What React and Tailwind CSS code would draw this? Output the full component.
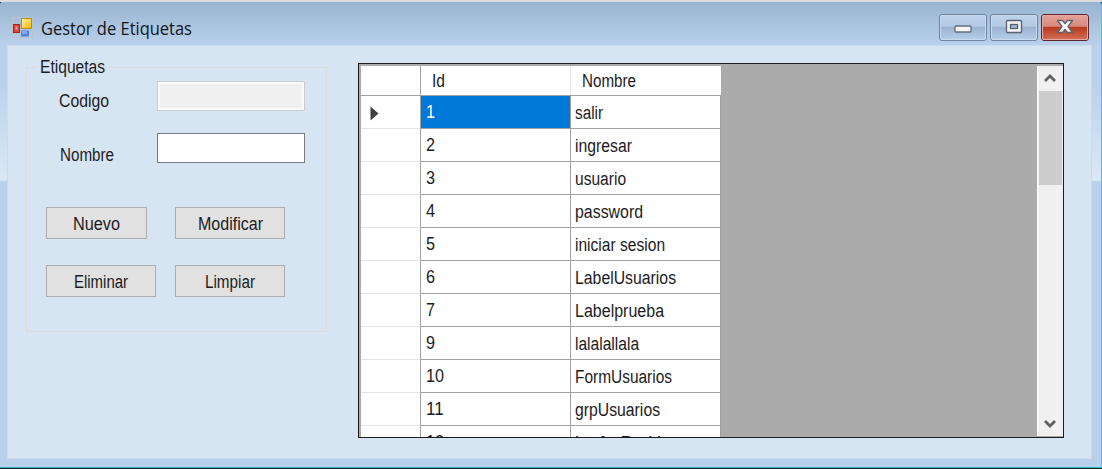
import { useLayoutEffect, useRef } from "react";

// Single line of text squeezed to the narrow widths of the system bitmap font.
function Label({ children, width, className = "" }) {
  const ref = useRef(null);
  useLayoutEffect(() => {
    const el = ref.current;
    el.style.transform = `scaleX(${width / el.offsetWidth})`;
  }, [width]);
  return (
    <span className={`block shrink-0 ${className}`} style={{ width }}>
      <span ref={ref} className="inline-block origin-left whitespace-nowrap">
        {children}
      </span>
    </span>
  );
}

const rows = [
  ["1", 9, "salir", 28],
  ["2", 9, "ingresar", 57],
  ["3", 9, "usuario", 51],
  ["4", 9, "password", 68],
  ["5", 9, "iniciar sesion", 90],
  ["6", 9, "LabelUsuarios", 101],
  ["7", 9, "Labelprueba", 89],
  ["9", 9, "lalalallala", 64],
  ["10", 18, "FormUsuarios", 97],
  ["11", 18, "grpUsuarios", 85],
  ["12", 18, "lenforPatU", 86],
];

function AppIcon() {
  return (
    <svg width="22" height="22" viewBox="0 0 22 22" className="shrink-0">
      <defs>
        <linearGradient id="gold" x1="0" y1="0" x2="1" y2="1">
          <stop offset="0" stopColor="#fff3a5" />
          <stop offset="1" stopColor="#f0b400" />
        </linearGradient>
      </defs>
      <path d="M.5 .5H20.500V20.500H.5Z" fill="none" stroke="#bcc2ca" />
      <rect x="1.500" y="7.500" width="6" height="8" fill="#d9453a" stroke="#ae2119" />
      <rect x="3.500" y="9.500" width="2" height="3" fill="#f19a8c" />
      <rect x="9.500" y="1.500" width="10" height="10" fill="url(#gold)" stroke="#b98a1c" />
      <rect x="9" y="13.500" width="8" height="6" fill="#4f80dc" />
      <rect x="10" y="14" width="5" height="3" fill="#83aaf0" />
    </svg>
  );
}

function CaptionButton({ close, children }) {
  return (
    <div
      className={`flex h-[27px] w-[48px] items-center justify-center rounded-[3px] border ${
        close ? "border-[#5f2430]" : "border-[#6d83a0]"
      }`}
    >
      <div
        className={`flex h-full w-full items-center justify-center rounded-[2px] border ${
          close
            ? "border-[#e8aaa0] bg-[linear-gradient(#e3a095_0%,#d88a7e_45%,#b8371f_48%,#d06c54_100%)]"
            : "border-[#c9dbef] bg-[linear-gradient(#bdd2ea_0%,#b2c9e3_45%,#98b2d0_48%,#b3cde9_100%)]"
        }`}
      >
        {children}
      </div>
    </div>
  );
}

function PushButton({ children, width, className }) {
  return (
    <button className={`flex h-[32px] items-center justify-center border border-[#adadad] bg-[#e1e1e1] pt-px ${className}`}>
      <Label width={width}>{children}</Label>
    </button>
  );
}

export default function App() {
  return (
    <div className="flex h-[469px] w-[1102px] flex-col overflow-hidden border-t-2 border-[#dcdcdc] bg-[#1c2a30] font-['Liberation_Sans',sans-serif] text-[18px] leading-[22px] text-[#1c1c24]">
      <div className="flex h-[466px] flex-col rounded-t-[3px] border-r border-b border-r-[#45c4e4] border-b-[#2ab5cf] bg-[linear-gradient(#99b4d1_0px,#b9d1ea_44px,#b9d1ea_80px,#dbe8f5_178px,#b9d0ea_180px)]">
        <div className="flex h-[43px] shrink-0 items-start rounded-t-[3px] bg-[linear-gradient(#99b4d1,#b9d1ea)] pl-3">
          <div className="pt-[15px]">
            <AppIcon />
          </div>
          <Label width={151} className="mt-[15px] ml-[7px] font-['Open_Sans',sans-serif] text-[18px] text-[#14161c]">
            Gestor de Etiquetas
          </Label>
          <div className="mt-[12px] ml-auto mr-[12px] flex gap-[3px]">
            <CaptionButton>
              <svg width="18" height="10" viewBox="0 0 18 10" className="mt-[3px]">
                <rect x="1" y="2" width="16" height="6" rx="1" fill="#f4f4f4" stroke="#646d7b" strokeWidth="1.300" />
              </svg>
            </CaptionButton>
            <CaptionButton>
              <svg width="18" height="16" viewBox="0 0 18 16" className="-mt-px">
                <rect x="1.500" y="1.500" width="15" height="12" rx="1" fill="#f4f4f4" stroke="#59616e" strokeWidth="1.300" />
                <rect x="5.500" y="5.500" width="7" height="4" fill="#9db7d4" stroke="#59616e" strokeWidth="1.300" />
              </svg>
            </CaptionButton>
            <CaptionButton close>
              <svg width="18" height="16" viewBox="0 0 18 16" className="-mt-px">
                <path
                  d="M1.500 1.500H6.500L9 4.500L11.500 1.500H16.500L12 7.500L16.500 13.500H11.500L9 10.500L6.500 13.500H1.500L6 7.500Z"
                  fill="#f4f4f4"
                  stroke="#60626e"
                  strokeWidth="1.300"
                  strokeLinejoin="round"
                />
              </svg>
            </CaptionButton>
          </div>
        </div>

        <div className="mr-[9px] ml-[7px] flex h-[414px] shrink-0 items-start border border-[#c8dcf0] bg-[#d7e4f2] pl-[18px]">
          <fieldset className="mt-[13px] h-[273px] w-[301px] border border-[#dcdcdc] pl-[19px]">
            <legend className="-ml-[9px] h-[16px] px-[3px]">
              <Label width={65} className="-mt-[3px]">Etiquetas</Label>
            </legend>
            <div className="mt-[6px] flex h-[30px] items-start pl-[13px]">
              <Label width={50} className="mt-[9px]">Codigo</Label>
              <div className="ml-auto mr-[21px] h-[30px] w-[148px] border border-[#cccccc] bg-[#f0f0f0] shadow-[inset_0_0_0_2px_#fafafa]" />
            </div>
            <div className="mt-[22px] flex h-[30px] items-start pl-[14px]">
              <Label width={54} className="mt-[11px]">Nombre</Label>
              <div className="ml-auto mr-[21px] h-[30px] w-[148px] border border-[#7a7a7a] bg-white" />
            </div>
            <div className="mt-[44px] flex">
              <PushButton width={47} className="w-[101px]">Nuevo</PushButton>
              <PushButton width={65} className="ml-[28px] w-[110px]">Modificar</PushButton>
            </div>
            <div className="mt-[26px] flex">
              <PushButton width={54} className="w-[110px]">Eliminar</PushButton>
              <PushButton width={50} className="ml-[19px] w-[110px]">Limpiar</PushButton>
            </div>
          </fieldset>

          <div className="mt-[17px] ml-[31px] flex h-[375px] w-[706px] overflow-hidden border-[1.500px] border-[#1c1c1f] bg-[#ababab] pt-[2px] pl-[2px]">
            <div className="w-[360px] shrink-0">
              <div className="flex h-[30px] border-b border-[#a0a0a0] bg-white">
                <div className="w-[60px] border-r border-[#a0a0a0]" />
                <div className="w-[150px] border-r border-[#e5e5e5] pt-[4px] pl-[11px]">
                  <Label width={13}>Id</Label>
                </div>
                <div className="flex-1 pt-[4px] pl-[11px]">
                  <Label width={54}>Nombre</Label>
                </div>
              </div>
              {rows.map(([id, idWidth, name, nameWidth], i) => (
                <div key={id} className="flex h-[33px]">
                  <div className="flex w-[60px] items-center border-r border-b border-r-[#a0a0a0] border-b-[#e5e5e5] bg-white pl-[9px]">
                    {i === 0 && (
                      <svg width="9" height="15" viewBox="0 0 9 15" className="mt-[3px]">
                        <path d="M.5 .5L8.500 7.500L.5 14.500Z" fill="#404040" />
                      </svg>
                    )}
                  </div>
                  <div
                    className={`w-[150px] border-r border-b border-[#a0a0a0] pt-[5px] pl-[5px] ${
                      i === 0 ? "bg-[#0078d7] text-white" : "bg-white"
                    }`}
                  >
                    <Label width={idWidth}>{id}</Label>
                  </div>
                  <div className="flex-1 border-r border-b border-[#a0a0a0] bg-white pt-[6px] pl-[4px]">
                    <Label width={nameWidth}>{name}</Label>
                  </div>
                </div>
              ))}
            </div>
            <div className="ml-auto flex h-[370px] w-[26px] flex-col items-center border-l border-white bg-[#f0f0f0] pr-px">
              <svg width="14" height="12" viewBox="0 0 14 12" className="mt-[6px] shrink-0">
                <path d="M2 9L7 4L12 9" fill="none" stroke="#606060" strokeWidth="2.800" />
              </svg>
              <div className="mt-[7px] h-[94px] w-[23px] shrink-0 bg-[#cdcdcd]" />
              <svg width="14" height="12" viewBox="0 0 14 12" className="mt-auto mb-[6px] shrink-0">
                <path d="M2 3L7 8L12 3" fill="none" stroke="#606060" strokeWidth="2.800" />
              </svg>
            </div>
          </div>
        </div>
      </div>
    </div>
  );
}
